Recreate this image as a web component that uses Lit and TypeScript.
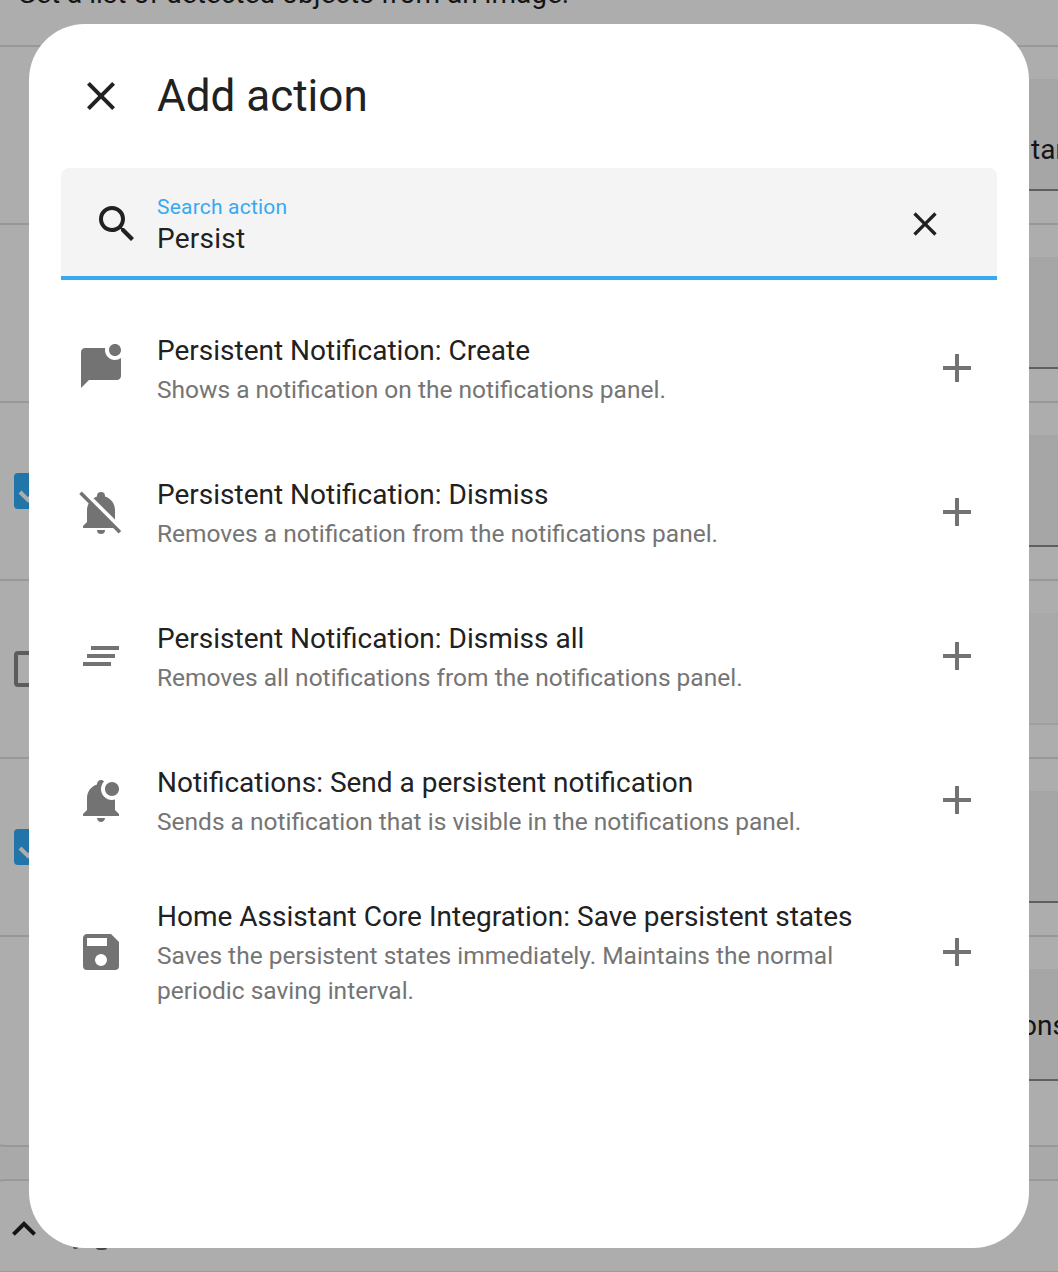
import { LitElement, html, svg, css, nothing } from "lit";
import { customElement, property } from "lit/decorators.js";

const ICONS: Record<string, string> = {
  close:
    "M19,6.41L17.59,5L12,10.59L6.41,5L5,6.41L10.59,12L5,17.59L6.41,19L12,13.41L17.59,19L19,17.59L13.41,12L19,6.41Z",
  magnify:
    "M9.5,3A6.5,6.5 0 0,1 16,9.5C16,11.11 15.41,12.59 14.44,13.73L14.71,14H15.5L20.5,19L19,20.5L14,15.5V14.71L13.73,14.44C12.59,15.41 11.11,16 9.5,16A6.5,6.5 0 0,1 3,9.5A6.5,6.5 0 0,1 9.5,3M9.5,5C7,5 5,7 5,9.5C5,12 7,14 9.5,14C12,14 14,12 14,9.5C14,7 12,5 9.5,5Z",
  messageBadge:
    "M22 7V16C22 17.1 21.1 18 20 18H6L2 22V4C2 2.9 2.9 2 4 2H14.1C14 2.3 14 2.7 14 3C14 5.8 16.2 8 19 8C20.1 8 21.2 7.6 22 7M16 3C16 4.7 17.3 6 19 6S22 4.7 22 3 20.7 0 19 0 16 1.3 16 3Z",
  bellOff:
    "M20.84,22.73L18.11,20H3V19L5,17V11C5,9.86 5.29,8.73 5.83,7.72L1.11,3L2.39,1.73L22.11,21.46L20.84,22.73M19,15.8V11C19,7.9 16.97,5.17 14,4.29C14,4.19 14,4.1 14,4A2,2 0 0,0 12,2A2,2 0 0,0 10,4C10,4.1 10,4.19 10,4.29C9.39,4.47 8.8,4.74 8.26,5.09L19,15.8M12,23A2,2 0 0,0 14,21H10A2,2 0 0,0 12,23Z",
  clearAll: "M5,13H19V11H5M3,17H17V15H3M7,7V9H21V7",
  bellBadge:
    "M21 6.5C21 8.43 19.43 10 17.5 10S14 8.43 14 6.5 15.57 3 17.5 3 21 4.57 21 6.5M19 11.79C18.5 11.92 18 12 17.5 12C14.47 12 12 9.53 12 6.5C12 5.03 12.58 3.7 13.5 2.71C13.15 2.28 12.61 2 12 2C10.9 2 10 2.9 10 4V4.29C7.03 5.17 5 7.9 5 11V17L3 19V20H21V19L19 17V11.79M12 23C13.11 23 14 22.11 14 21H10C10 22.11 10.9 23 12 23Z",
  save: "M15,9H5V5H15M12,19A3,3 0 0,1 9,16A3,3 0 0,1 12,13A3,3 0 0,1 15,16A3,3 0 0,1 12,19M17,3H5C3.89,3 3,3.9 3,5V19A2,2 0 0,0 5,21H19A2,2 0 0,0 21,19V7L17,3Z",
  plus: "M19,13H13V19H11V13H5V11H11V5H13V11H19V13Z",
  chevronUp: "M7.41,15.41L12,10.83L16.59,15.41L18,14L12,8L6,14L7.41,15.41Z",
};

@customElement("mdi-icon")
export class MdiIcon extends LitElement {
  @property() name = "";
  static styles = css`
    :host { display: block; flex: none; width: 48px; height: 48px; }
    .glyph { display: block; width: 100%; height: 100%; fill: currentColor; }
  `;
  render() {
    return html`<svg class="glyph" viewBox="0 0 24 24">${svg`<path d=${ICONS[this.name] ?? ""}></path>`}</svg>`;
  }
}

interface Setting {
  check?: "on" | "off";
  value?: string;
  disabled?: boolean;
}

const SETTINGS: Setting[] = [
  { value: "tar" },
  {},
  { check: "on" },
  { check: "off", disabled: true },
  { check: "on" },
  { value: "ons" },
];

@customElement("editor-page")
export class EditorPage extends LitElement {
  static styles = css`
    :host {
      display: flex; flex-direction: column; height: 1272px; overflow: hidden;
      background: #a9a9a9; color: #151515;
      font: 400 28px/40px Roboto, sans-serif;
    }
    .card {
      flex: none; margin-left: -18px; padding-left: 18px; background: #adadad;
      border-bottom: 2px solid #989898; border-bottom-left-radius: 24px;
    }
    .description {
      height: 45px; padding-left: 17px; box-sizing: border-box; line-height: 40px;
      white-space: nowrap;
    }
    .description-text { display: block; transform: translateY(-26px); }
    .setting {
      display: flex; justify-content: space-between; align-items: flex-start; box-sizing: border-box;
      height: 178px; padding-top: 32px; border-top: 2px solid #989898;
    }
    .setting:last-child { height: 210px; }
    .check { box-sizing: border-box; width: 36px; height: 36px; margin: 38px 0 0 14px; border-radius: 4px; }
    .check.off { border: 4px solid #5c5c5c; }
    .check.on { background: #2275a8; }
    .tick { display: block; width: 36px; height: 36px; fill: none; stroke: #adadad; stroke-width: 4; }
    .field {
      box-sizing: border-box; width: 58px; height: 112px; margin-left: auto; padding: 51px 0 0 31px;
      background: #a6a6a6; border-bottom: 2px solid #5f5f5f; overflow: hidden;
    }
    .field.disabled { background: #a9a9a9; border-color: #9f9f9f; }
    .field.end { padding: 37px 0 0 21px; }
    .next {
      flex: none; display: flex; box-sizing: border-box; height: 94px; margin: 32px 0 0 -18px; padding-left: 18px;
      background: #adadad; border-top: 2px solid #989898; border-bottom: 2px solid #9c9c9c;
      border-top-left-radius: 24px;
    }
    .next-icon { margin-top: 24px; }
    .next-label { margin: 66px 0 0 25px; display: flex; gap: 18px; }
    .tail { width: 5px; height: 2px; border-radius: 0 0 3px 3px; background: #4a4a4a; }
    .tail.wide { width: 11px; height: 3px; }
  `;
  private renderCheck(state: "on" | "off") {
    return html`<div class="check ${state}">
      ${state === "on"
        ? html`<svg class="tick" viewBox="0 0 36 36"><path d="M6 19 L14 27 L30 11"></path></svg>`
        : nothing}
    </div>`;
  }
  render() {
    return html`
      <div class="card">
        <div class="description"><span class="description-text">Get a list of detected objects from an image.</span></div>
        ${SETTINGS.map(
          (s) => html`<div class="setting">
            ${s.check ? this.renderCheck(s.check) : nothing}
            <div class="field ${s.disabled ? "disabled" : ""} ${s.value === "ons" ? "end" : ""}">${s.value ?? nothing}</div>
          </div>`
        )}
      </div>
      <div class="next">
        <mdi-icon class="next-icon" name="chevronUp"></mdi-icon>
        <div class="next-label"><span class="tail"></span><span class="tail wide"></span></div>
      </div>
    `;
  }
}

interface Action {
  icon: string;
  title: string;
  detail: string;
}

const ACTIONS: Action[] = [
  { icon: "messageBadge", title: "Persistent Notification: Create", detail: "Shows a notification on the notifications panel." },
  { icon: "bellOff", title: "Persistent Notification: Dismiss", detail: "Removes a notification from the notifications panel." },
  { icon: "clearAll", title: "Persistent Notification: Dismiss all", detail: "Removes all notifications from the notifications panel." },
  { icon: "bellBadge", title: "Notifications: Send a persistent notification", detail: "Sends a notification that is visible in the notifications panel." },
  { icon: "save", title: "Home Assistant Core Integration: Save persistent states", detail: "Saves the persistent states immediately. Maintains the normal periodic saving interval." },
];

@customElement("app-root")
export class AppRoot extends LitElement {
  static styles = css`
    :host { display: block; position: relative; width: 1058px; height: 1272px; overflow: hidden; font-family: Roboto, sans-serif; color: #212121; }
    .dialog {
      position: absolute; inset: 24px 29px; box-sizing: border-box; display: flex; flex-direction: column;
      background: #fff; border-radius: 56px;
    }
    .header { display: flex; align-items: center; gap: 32px; height: 144px; padding-left: 48px; box-sizing: border-box; }
    .title { margin: 0; font-size: 44px; line-height: 56px; font-weight: 400; }
    .search {
      display: flex; align-items: center; box-sizing: border-box; height: 112px; margin: 0 32px;
      padding: 4px 52px 0 32px; background: #f4f4f4; border-bottom: 4px solid #36a9f1; border-radius: 8px 8px 0 0;
    }
    .search-text { flex: 1; margin-left: 16px; padding-top: 2px; }
    .label { font-size: 21px; line-height: 28px; color: #36a9f1; letter-spacing: 0.2px; }
    .value { font-size: 28px; line-height: 36px; letter-spacing: 0.25px; }
    .clear { width: 40px; height: 40px; }
    .list { padding-top: 16px; }
    .row { display: flex; align-items: center; box-sizing: border-box; height: 144px; padding: 0 48px; }
    .row:last-child { height: 160px; }
    .row-icon, .add { color: #737373; }
    .text { flex: 1; margin: 0 80px 0 32px; }
    .name { font-size: 28px; line-height: 43px; white-space: nowrap; }
    .row:last-child .name { line-height: 42px; }
    .detail { font-size: 24.5px; line-height: 35px; color: #757575; }
  `;
  render() {
    return html`
      <editor-page></editor-page>
      <div class="dialog">
        <div class="header">
          <mdi-icon name="close"></mdi-icon>
          <h2 class="title">Add action</h2>
        </div>
        <div class="search">
          <mdi-icon name="magnify"></mdi-icon>
          <div class="search-text">
            <div class="label">Search action</div>
            <div class="value">Persist</div>
          </div>
          <mdi-icon class="clear" name="close"></mdi-icon>
        </div>
        <div class="list">
          ${ACTIONS.map(
            (a) => html`<div class="row">
              <mdi-icon class="row-icon" name=${a.icon}></mdi-icon>
              <div class="text">
                <div class="name">${a.title}</div>
                <div class="detail">${a.detail}</div>
              </div>
              <mdi-icon class="add" name="plus"></mdi-icon>
            </div>`
          )}
        </div>
      </div>
    `;
  }
}
